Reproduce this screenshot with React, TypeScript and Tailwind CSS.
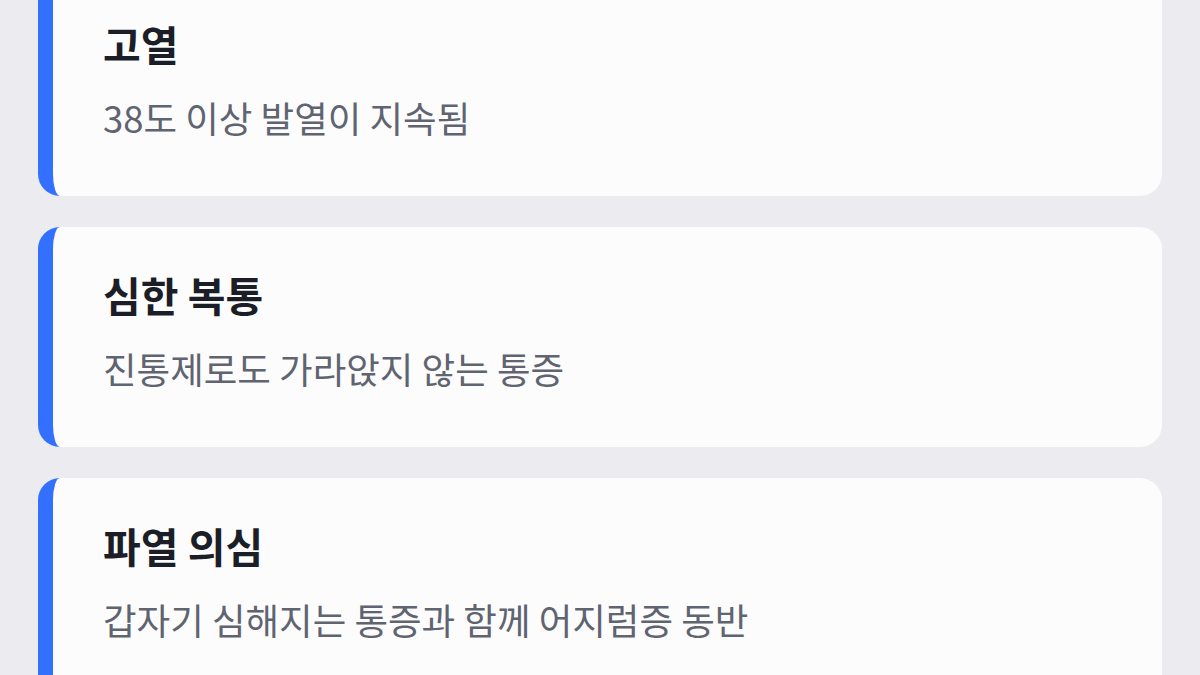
const symptoms = [
  { title: '고열', desc: '38도 이상 발열이 지속됨' },
  { title: '심한 복통', desc: '진통제로도 가라앉지 않는 통증' },
  { title: '파열 의심', desc: '갑자기 심해지는 통증과 함께 어지럼증 동반' },
];

export default function App() {
  return (
    <div
      className="h-[675px] overflow-hidden bg-[#ececf0]"
      style={{ fontFamily: '"Noto Sans CJK KR", "Noto Sans", sans-serif' }}
    >
      <div className="mt-[-24px] flex flex-col gap-[31px] pl-[38px] pr-[38px]">
        {symptoms.map((s) => (
          <div
            key={s.title}
            className="flex h-[220px] shrink-0 flex-col rounded-[22px] border-l-[15px] border-[#3370ff] bg-[#fcfcfd] pl-[50px] pr-8 pt-[40px]"
          >
            <p className="text-[41px] font-bold leading-[54px] text-[#1b1e26]">{s.title}</p>
            <p className="mt-[24px] text-[36.5px] leading-[48px] text-[#5f6470]">{s.desc}</p>
          </div>
        ))}
      </div>
    </div>
  );
}
